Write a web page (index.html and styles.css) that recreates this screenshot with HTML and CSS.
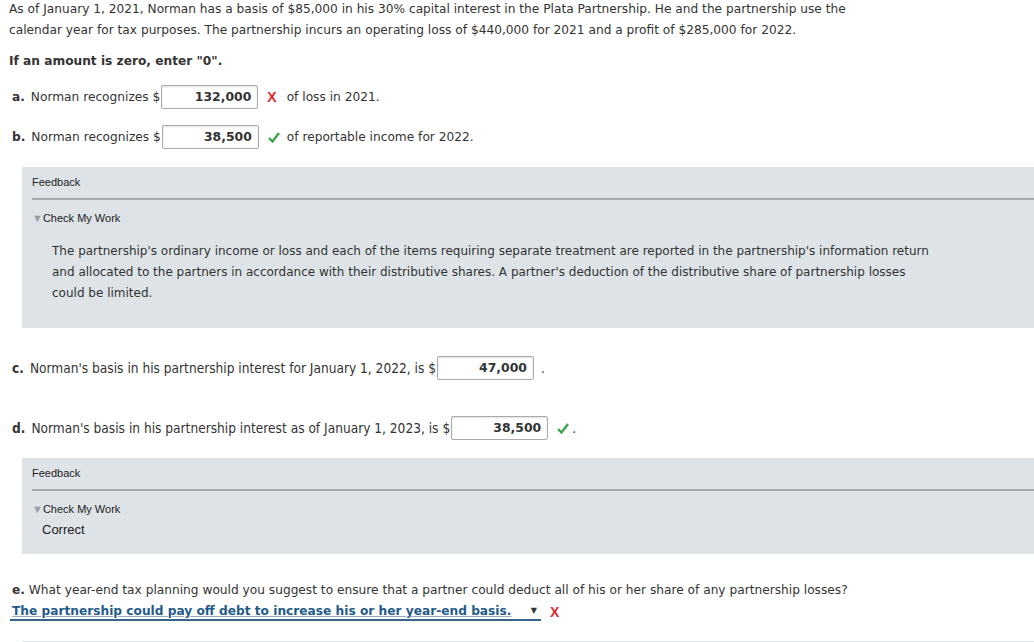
FILE: index.html
```html
<!DOCTYPE html>
<html>
<head>
<meta charset="utf-8">
<link rel="stylesheet" href="styles.css">
</head>
<body>
<div class="page">
  <p class="intro">As of January 1, 2021, Norman has a basis of $85,000 in his 30% capital interest in the Plata Partnership. He and the partnership use the calendar year for tax purposes. The partnership incurs an operating loss of $440,000 for 2021 and a profit of $285,000 for 2022.</p>
  <p class="note">If an amount is zero, enter "0".</p>

  <div class="row row-a">
    <span class="lbl">a.</span><span class="txt">Norman recognizes $</span><span class="box">132,000</span><span class="mark x">X</span><span class="after">of loss in 2021.</span>
  </div>
  <div class="row row-b">
    <span class="lbl">b.</span><span class="txt">Norman recognizes $</span><span class="box">38,500</span><span class="mark ok"><svg width="12" height="11" viewBox="0 0 12 11"><path d="M1 6 L4.5 9.5 L11 1" fill="none" stroke="#3fa34d" stroke-width="2.4"/></svg></span><span class="after">of reportable income for 2022.</span>
  </div>

  <div class="feedback fb1">
    <div class="fb-head">Feedback</div>
    <div class="fb-check"><span class="tri">▼</span>Check My Work</div>
    <p class="fb-text">The partnership's ordinary income or loss and each of the items requiring separate treatment are reported in the partnership's information return and allocated to the partners in accordance with their distributive shares. A partner's deduction of the distributive share of partnership losses could be limited.</p>
  </div>

  <div class="row narrow row-c">
    <span class="lbl">c.</span><span class="txt">Norman's basis in his partnership interest for January 1, 2022, is $</span><span class="box">47,000</span><span class="dot">.</span>
  </div>
  <div class="row narrow row-d">
    <span class="lbl">d.</span><span class="txt">Norman's basis in his partnership interest as of January 1, 2023, is $</span><span class="box">38,500</span><span class="mark ok"><svg width="12" height="11" viewBox="0 0 12 11"><path d="M1 6 L4.5 9.5 L11 1" fill="none" stroke="#3fa34d" stroke-width="2.4"/></svg></span><span class="dot">.</span>
  </div>

  <div class="feedback fb2">
    <div class="fb-head">Feedback</div>
    <div class="fb-check"><span class="tri">▼</span>Check My Work</div>
    <div class="fb-correct">Correct</div>
  </div>

  <div class="q-e">
    <span class="lbl">e.</span> What year-end tax planning would you suggest to ensure that a partner could deduct all of his or her share of any partnership losses?
  </div>
  <div class="select-row">
    <span class="select"><span class="sel-text">The partnership could pay off debt to increase his or her year-end basis.</span><span class="arrow">▼</span></span><span class="mark x">X</span>
  </div>
  <div class="feedback fb3"></div>
</div>
</body>
</html>
```
FILE: styles.css
```css
html, body {
  margin: 0;
  padding: 0;
  background: #fff;
  overflow: hidden;
}
.page {
  font-family: "DejaVu Sans", Verdana, sans-serif;
  font-size: 12.2px;
  color: #333;
  padding-left: 9px;
}
.intro {
  margin: -1px 0 0 0;
  line-height: 21px;
  width: 860px;
}
.note {
  font-weight: bold;
  margin: 10px 0 0 0;
  line-height: 21px;
}
.row {
  display: flex;
  align-items: center;
  height: 24px;
  padding-left: 3px;
}
.row-a { margin-top: 13px; }
.row-b { margin-top: 16px; }
.lbl { font-weight: bold; margin-right: 6px; }
.box {
  box-sizing: border-box;
  width: 97px;
  height: 24px;
  border: 1px solid #aaa;
  border-radius: 2px;
  box-shadow: inset 0 1px 2px rgba(0,0,0,0.12);
  font-family: "DejaVu Sans", Verdana, sans-serif;
  font-size: 12.4px;
  font-weight: bold;
  text-align: right;
  padding-right: 6px;
  line-height: 22px;
  margin-left: 1px;
  color: #333;
}
.mark { display: inline-flex; align-items: center; margin-left: 9px; margin-right: 10px; }
.mark.ok { margin-right: 7px; }
.mark.x {
  color: #dc2a30;
  font-family: "Liberation Sans", Arial, sans-serif;
  font-weight: bold;
  font-size: 14px;
}
.feedback {
  background: #dde3e7;
  margin-left: 13px;
  margin-right: -20px;
  font-family: "Liberation Sans", Arial, sans-serif;
  color: #222;
}
.fb1 { margin-top: 18px; height: 161px; padding-top: 9px; box-sizing: border-box; }
.fb-head {
  font-size: 11px;
  margin-left: 10px;
  padding-bottom: 10px;
  border-bottom: 2px solid #a3aaae;
  line-height: 12px;
}
.fb-check {
  font-size: 11px;
  margin: 12px 0 0 10px;
  line-height: 12px;
}
.tri { font-size: 11px; color: #9a9fa3; margin-right: 0; vertical-align: 0; }
.fb-text {
  font-family: "DejaVu Sans", Verdana, sans-serif;
  font-size: 12px;
  color: #333;
  line-height: 21px;
  margin: 17px 0 0 30px;
  width: 885px;
}
.narrow { font-family: "DejaVu Sans Condensed", "DejaVu Sans", sans-serif; font-size: 13.6px; }
.row-c { margin-top: 28px; }
.row-d { margin-top: 36px; }
.dot { margin-left: 7px; }
.row-d .dot { margin-left: -4px; }
.fb2 { margin-top: 18px; height: 96px; padding-top: 9px; box-sizing: border-box; }
.fb-correct { font-size: 13px; margin: 7px 0 0 20px; }
.q-e { margin-top: 28px; padding-left: 3px; line-height: 16px; }
.q-e .lbl { margin-right: 0; }
.select-row { display: flex; align-items: center; margin-top: 5px; padding-left: 1px; }
.select {
  box-sizing: border-box;
  color: #1f5a8a;
  font-weight: bold;
  border-bottom: 2px solid #36658c;
  line-height: 16px;
  display: inline-flex;
  align-items: center;
  width: 531px;
  white-space: nowrap;
  padding-left: 2px;
}
.sel-text { text-decoration: underline; text-decoration-color: #9ab; }
.arrow { font-size: 8px; color: #333; margin-left: auto; margin-right: 4px; }
.select-row .mark { margin-left: 9px; }
.fb3 { margin-top: 20px; height: 20px; }
```
